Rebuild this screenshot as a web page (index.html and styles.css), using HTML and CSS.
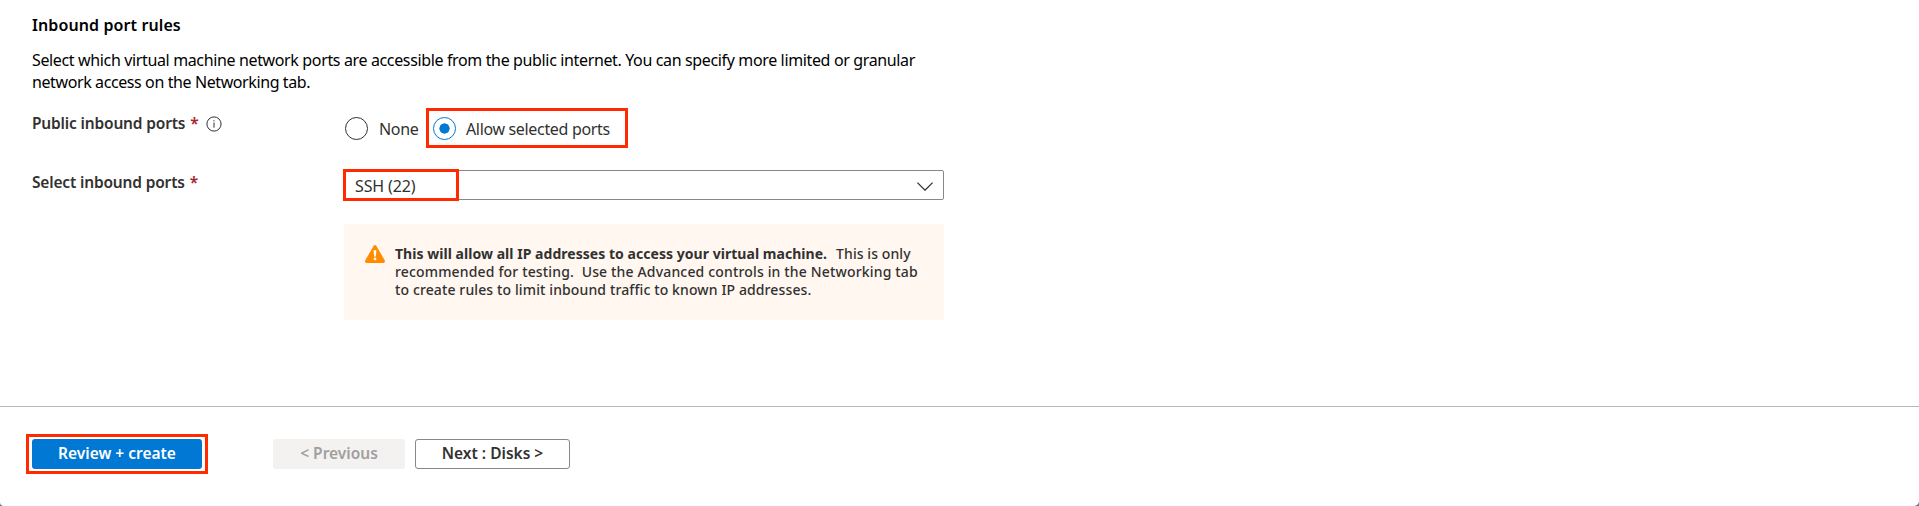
FILE: index.html
```
<!DOCTYPE html>
<html lang="en">
<head>
<meta charset="utf-8">
<title>Create a virtual machine</title>
<link rel="stylesheet" href="styles.css">
</head>
<body>
<div class="page">
<main class="form">
  <h2 class="title">Inbound port rules</h2>
  <p class="intro">Select which virtual machine network ports are accessible from the public internet. You can specify more limited or granular<br><span class="intro-end">network access on the Networking tab.</span></p>
  <div class="row row-radios">
    <div class="label"><span>Public inbound ports</span><span class="star">*</span>
      <svg class="info" width="16" height="16" viewBox="0 0 16 16" fill="none" stroke="#323130"><circle cx="8" cy="8" r="7.1"/><path d="M8 6.6v5M8 4.2v1.2"/></svg>
    </div>
    <div class="radios">
      <label class="option"><span class="radio"></span><span class="option-text">None</span></label>
      <label class="option marked"><span class="radio on"></span><span class="option-text">Allow selected ports</span></label>
    </div>
  </div>
  <div class="row row-select">
    <div class="label"><span>Select inbound ports</span><span class="star">*</span></div>
    <div class="select">
      <div class="value">SSH (22)</div>
      <svg class="chevron" width="16" height="9" viewBox="0 0 16 9" fill="none" stroke="#323130" stroke-width="1.3"><path d="M.4.6 8 8.2 15.6.6"/></svg>
    </div>
  </div>
  <div class="warning">
    <svg class="alert" width="20" height="18" viewBox="0 0 20 18"><path d="M8.7.8Q10-.7 11.3.8L19.7 15.3Q20.5 17.9 18.4 18H1.6Q-.5 17.9.3 15.3Z" fill="#ff8c00"/><path d="M8.6 5.2h2.8l-.5 6.2H9.1Z" fill="#fff"/><circle cx="10" cy="13.9" r="1.3" fill="#fff"/></svg>
    <p class="warning-text"><b>This will allow all IP addresses to access your virtual machine.</b><span class="w1">This is only</span><br><span class="w2">recommended for testing.&nbsp; Use the Advanced controls in the Networking tab</span><br><span class="w3">to create rules to limit inbound traffic to known IP addresses.</span></p>
  </div>
</main>
<footer class="footer">
  <div class="mark"><button class="btn primary">Review + create</button></div>
  <button class="btn disabled" disabled>&lt; Previous</button>
  <button class="btn next">Next : Disks &gt;</button>
</footer>
</div>
</body>
</html>
```
FILE: styles.css
```
* { box-sizing: border-box; }
html { background: #6f767d; }
body {
  margin: 0;
  color: #323130;
  font: 16px/22px "Noto Sans", sans-serif;
}
.page { height: 506px; overflow: hidden; background: #fff; border-radius: 0 0 5px 4px; }
.form { width: 944px; height: 406px; padding: 14px 0 0 32px; }
.title { margin: 0; color: #000; font-size: 16px; line-height: 22px; font-weight: 600; letter-spacing: .1px; }
.intro { margin: 13px 0 0; color: #000; line-height: 22px; letter-spacing: -.36px; white-space: nowrap; }
.intro-end { letter-spacing: -.4px; }
.row { display: flex; }
.row-radios { margin-top: 15px; height: 40px; }
.row-select { margin-top: 22px; height: 30px; }
.label { display: flex; width: 311px; height: 22px; margin-top: 4px; font-size: 15.5px; font-weight: 600; letter-spacing: -.17px; }
.row-select .label { margin-top: 1px; }
.star { margin-left: 5px; color: #a4262c; }
.info { margin: 4px 0 0 7px; }
.radios { display: flex; }
.option { display: flex; align-items: center; gap: 11px; height: 40px; padding-left: 2px; }
.option-text { padding-top: 1px; letter-spacing: -.33px; white-space: nowrap; }
.radio { width: 23px; height: 23px; border: 1px solid #323130; border-radius: 50%; }
.radio.on { border-color: #0078d4; background: radial-gradient(circle, #0078d4 4.8px, transparent 5.4px); }
.marked { width: 202px; margin-left: 7.5px; padding-left: 4px; gap: 10px; border: 3px solid #ff2a00; }
.select { display: flex; align-items: center; width: 601px; height: 30px; border: 1px solid #8a8886; border-radius: 2px; }
.value { flex: none; width: 116px; height: 32px; margin-left: -1px; padding-left: 9px; border: 3px solid #ff2a00; line-height: 28px; letter-spacing: -.12px; }
.chevron { margin: 2px 10px 0 auto; }
.warning { display: flex; width: 600px; height: 96px; margin: 24px 0 0 312px; padding: 21px 0 0 21px; background: #fff7f0; border-radius: 3px; }
.alert { flex: none; }
.warning-text { margin: 0 0 0 10px; font-size: 14px; line-height: 18px; font-weight: 500; white-space: nowrap; }
.warning-text b { letter-spacing: .04px; }
.w1 { margin-left: 9px; letter-spacing: .08px; }
.w2 { letter-spacing: .16px; }
.w3 { letter-spacing: .12px; }
.footer { display: flex; height: 100px; border-top: 1px solid #b8b8b8; padding: 27px 0 0 26px; }
.mark { width: 182px; height: 40px; padding: 2px 3px; border: 3px solid #ff2a00; }
.btn { height: 30px; padding: 0 0 2px; border: 0; border-radius: 3px; font: 600 15.5px/26px "Noto Sans", sans-serif; }
.primary { display: block; width: 170px; background: #0078d4; color: #fff; }
.disabled { width: 132px; margin: 5px 0 0 65px; background: #f3f2f1; color: #a19f9d; }
.next { width: 155px; margin: 5px 0 0 10px; background: #fff; border: 1px solid #8a8886; color: #323130; }
```
